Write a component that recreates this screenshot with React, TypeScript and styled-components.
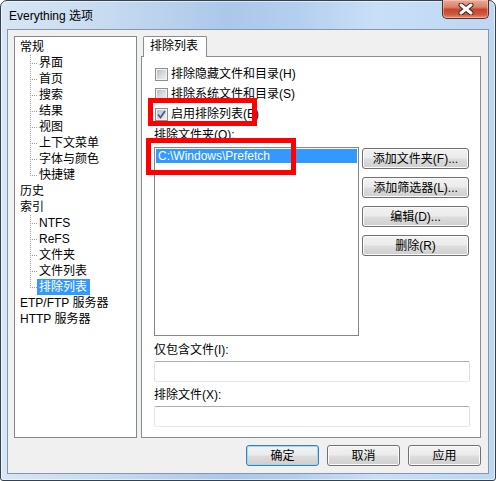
import React from 'react';
import styled, { createGlobalStyle } from 'styled-components';

const Global = createGlobalStyle`
  html, body { margin: 0; padding: 0; background: #ffffff; }
  body {
    font-family: "Liberation Sans", "Noto Sans CJK SC", sans-serif;
    font-size: 12px;
    color: #000;
  }
  * { box-sizing: border-box; }
`;

const Window = styled.div`
  position: relative;
  width: 496px;
  height: 481px;
  border: 1px solid #34414f;
  border-radius: 7px 7px 3px 3px;
  background: linear-gradient(90deg, #d8e6f5 0%, #c6daf0 22%, #abc8e9 46%, #b4cfee 60%, #c8dff7 76%, #bdd7f2 100%);
  box-shadow: inset 0 0 0 1px rgba(255, 255, 255, 0.55);
  padding: 0 6px 6px 6px;
  display: flex;
  flex-direction: column;
`;

const TitleBar = styled.div`
  height: 28px;
  display: flex;
  align-items: flex-start;
  justify-content: space-between;
`;

const TitleText = styled.div`
  margin: 7px 0 0 2px;
  line-height: 16px;
  color: #000;
`;

const CloseButton = styled.div`
  width: 47px;
  height: 19px;
  margin-top: -1px;
  border: 1px solid #5e2a22;
  border-top: none;
  border-radius: 0 0 5px 5px;
  background: linear-gradient(180deg, #e9aa98 0%, #d9826c 40%, #c7452e 52%, #cb5a40 80%, #e3907a 100%);
  box-shadow: inset 0 0 0 1px rgba(255, 220, 210, 0.45);
  display: flex;
  align-items: center;
  justify-content: center;
`;

const Client = styled.div`
  flex: 1;
  border: 1px solid #8497ad;
  background: #f0f0f0;
  padding: 6px 7px 7px 6px;
  display: flex;
  flex-direction: column;
`;

const Body = styled.div`
  height: 402px;
  display: flex;
  gap: 4px;
`;

const Tree = styled.div`
  width: 123px;
  height: 100%;
  border: 1px solid #828790;
  background: #fff;
  padding-top: 2px;
`;

const TreeRow = styled.div<{ $level: number }>`
  height: 16px;
  display: flex;
  align-items: center;
  padding-left: ${(p) => (p.$level === 0 ? 3 : 7)}px;
`;

const TreeLabel = styled.span<{ $selected?: boolean }>`
  height: 16px;
  line-height: 16px;
  padding: 0 3px 0 2px;
  white-space: nowrap;
  background: ${(p) => (p.$selected ? '#3399ff' : 'transparent')};
  color: ${(p) => (p.$selected ? '#fff' : '#000')};
`;

const TabControl = styled.div`
  flex: 1;
  display: flex;
  flex-direction: column;
`;

const TabStrip = styled.div`
  height: 20px;
  display: flex;
  padding-left: 2px;
`;

const Tab = styled.div`
  width: 64px;
  height: 21px;
  margin-bottom: -1px;
  position: relative;
  z-index: 1;
  border: 1px solid #898c95;
  border-bottom: none;
  border-radius: 2px 2px 0 0;
  background: #fff;
  line-height: 19px;
  padding-left: 6px;
`;

const TabPanel = styled.div`
  flex: 1;
  border: 1px solid #898c95;
  background: #fff;
  padding: 7px 0 0 12px;
  display: flex;
  flex-direction: column;
`;

const CheckRow = styled.div`
  height: 20px;
  display: flex;
  align-items: center;
  gap: 3px;
  padding-left: 1px;
  line-height: 16px;
`;

const CheckBox = styled.div`
  width: 13px;
  height: 13px;
  border: 1px solid #8e8f8f;
  background: #f4f4f4;
  padding: 1px;
  display: flex;
`;

const CheckInner = styled.div`
  flex: 1;
  background: linear-gradient(135deg, #b9bdc3 0%, #dadcdf 55%, #eeeeef 100%);
  display: flex;
  align-items: center;
  justify-content: center;
`;

const FieldLabel = styled.div<{ $top: number }>`
  margin-top: ${(p) => p.$top}px;
  line-height: 16px;
  height: 16px;
`;

const ListArea = styled.div`
  margin-top: 4px;
  display: flex;
  gap: 3px;
`;

const ListBox = styled.div`
  width: 205px;
  height: 189px;
  border: 1px solid #828790;
  background: #fff;
  padding: 1px;
`;

const ListItem = styled.div<{ $selected?: boolean }>`
  height: 14px;
  line-height: 14px;
  padding-left: 2px;
  background: ${(p) => (p.$selected ? '#3399ff' : 'transparent')};
  color: ${(p) => (p.$selected ? '#fff' : '#000')};
  white-space: nowrap;
`;

const SideButtons = styled.div`
  margin-top: 1px;
  display: flex;
  flex-direction: column;
  gap: 8px;
`;

const Button = styled.div<{ $width: number; $default?: boolean }>`
  width: ${(p) => p.$width}px;
  height: 21px;
  border: 1px solid ${(p) => (p.$default ? '#3c7fb1' : '#707070')};
  border-radius: 3px;
  background: linear-gradient(180deg, #f2f2f2 0%, #ebebeb 48%, #dddddd 52%, #cfcfcf 100%);
  box-shadow: inset 0 0 0 1px ${(p) => (p.$default ? '#9cdaf7' : '#fbfbfb')};
  display: flex;
  align-items: center;
  justify-content: center;
  line-height: 16px;
  white-space: nowrap;
`;

const TextBox = styled.div`
  margin-top: 3px;
  width: 316px;
  height: 21px;
  border: 1px solid;
  border-color: #abadb3 #dbdfe6 #e3e9ef #e2e3ea;
  border-radius: 2px;
  background: #fff;
`;

const Footer = styled.div`
  margin-top: 7px;
  display: flex;
  justify-content: flex-end;
  gap: 8px;
`;

const Annotation = styled.div<{ $x: number; $y: number; $w: number; $h: number }>`
  position: absolute;
  left: ${(p) => p.$x}px;
  top: ${(p) => p.$y}px;
  width: ${(p) => p.$w}px;
  height: ${(p) => p.$h}px;
  border: 5px solid #ff0000;
  pointer-events: none;
  z-index: 5;
`;

const Connector = ({ last }: { last?: boolean }) => (
  <svg width="15" height="16" viewBox="0 0 15 16" style={{ flex: 'none' }}>
    <line x1="8.5" y1="0" x2="8.5" y2={last ? 9 : 16} stroke="#a0a0a0" strokeDasharray="1 1" />
    <line x1="10" y1="8.5" x2="15" y2="8.5" stroke="#a0a0a0" strokeDasharray="1 1" />
  </svg>
);

const CloseGlyph = () => (
  <svg width="16" height="12" viewBox="0 0 16 12">
    <path d="M3 2 L13 10 M13 2 L3 10" stroke="#4a1d16" strokeWidth="5" strokeLinecap="round" />
    <path d="M3 2 L13 10 M13 2 L3 10" stroke="#ffffff" strokeWidth="3" strokeLinecap="round" />
  </svg>
);

const CheckMark = () => (
  <svg width="9" height="9" viewBox="0 0 9 9">
    <path d="M1 4.5 L3.5 7.5 L8 1" fill="none" stroke="#4a5c8a" strokeWidth="1.8" />
  </svg>
);

type Node = { label: string; level: number; last?: boolean; selected?: boolean };

const tree: Node[] = [
  { label: '常规', level: 0 },
  { label: '界面', level: 1 },
  { label: '首页', level: 1 },
  { label: '搜索', level: 1 },
  { label: '结果', level: 1 },
  { label: '视图', level: 1 },
  { label: '上下文菜单', level: 1 },
  { label: '字体与颜色', level: 1 },
  { label: '快捷键', level: 1, last: true },
  { label: '历史', level: 0 },
  { label: '索引', level: 0 },
  { label: 'NTFS', level: 1 },
  { label: 'ReFS', level: 1 },
  { label: '文件夹', level: 1 },
  { label: '文件列表', level: 1 },
  { label: '排除列表', level: 1, last: true, selected: true },
  { label: 'ETP/FTP 服务器', level: 0 },
  { label: 'HTTP 服务器', level: 0 },
];

const checks = [
  { label: '排除隐藏文件和目录(H)', checked: false },
  { label: '排除系统文件和目录(S)', checked: false },
  { label: '启用排除列表(E)', checked: true },
];

const sideButtons = ['添加文件夹(F)...', '添加筛选器(L)...', '编辑(D)...', '删除(R)'];

export default function App() {
  return (
    <>
      <Global />
      <Window>
        <TitleBar>
          <TitleText>Everything 选项</TitleText>
          <CloseButton>
            <CloseGlyph />
          </CloseButton>
        </TitleBar>
        <Client>
          <Body>
            <Tree>
              {tree.map((n) => (
                <TreeRow key={n.label} $level={n.level}>
                  {n.level > 0 && <Connector last={n.last} />}
                  <TreeLabel $selected={n.selected}>{n.label}</TreeLabel>
                </TreeRow>
              ))}
            </Tree>
            <TabControl>
              <TabStrip>
                <Tab>排除列表</Tab>
              </TabStrip>
              <TabPanel>
                {checks.map((c) => (
                  <CheckRow key={c.label}>
                    <CheckBox>
                      <CheckInner>{c.checked && <CheckMark />}</CheckInner>
                    </CheckBox>
                    <span>{c.label}</span>
                  </CheckRow>
                ))}
                <FieldLabel $top={3}>排除文件夹(O):</FieldLabel>
                <ListArea>
                  <ListBox>
                    <ListItem $selected>C:\Windows\Prefetch</ListItem>
                  </ListBox>
                  <SideButtons>
                    {sideButtons.map((b) => (
                      <Button key={b} $width={107}>
                        {b}
                      </Button>
                    ))}
                  </SideButtons>
                </ListArea>
                <FieldLabel $top={6}>仅包含文件(I):</FieldLabel>
                <TextBox />
                <FieldLabel $top={5}>排除文件(X):</FieldLabel>
                <TextBox />
              </TabPanel>
            </TabControl>
          </Body>
          <Footer>
            <Button $width={73} $default>
              确定
            </Button>
            <Button $width={73}>取消</Button>
            <Button $width={73}>应用</Button>
          </Footer>
        </Client>
        <Annotation $x={147} $y={97} $w={109} $h={28} />
        <Annotation $x={145} $y={137} $w={150} $h={37} />
      </Window>
    </>
  );
}
